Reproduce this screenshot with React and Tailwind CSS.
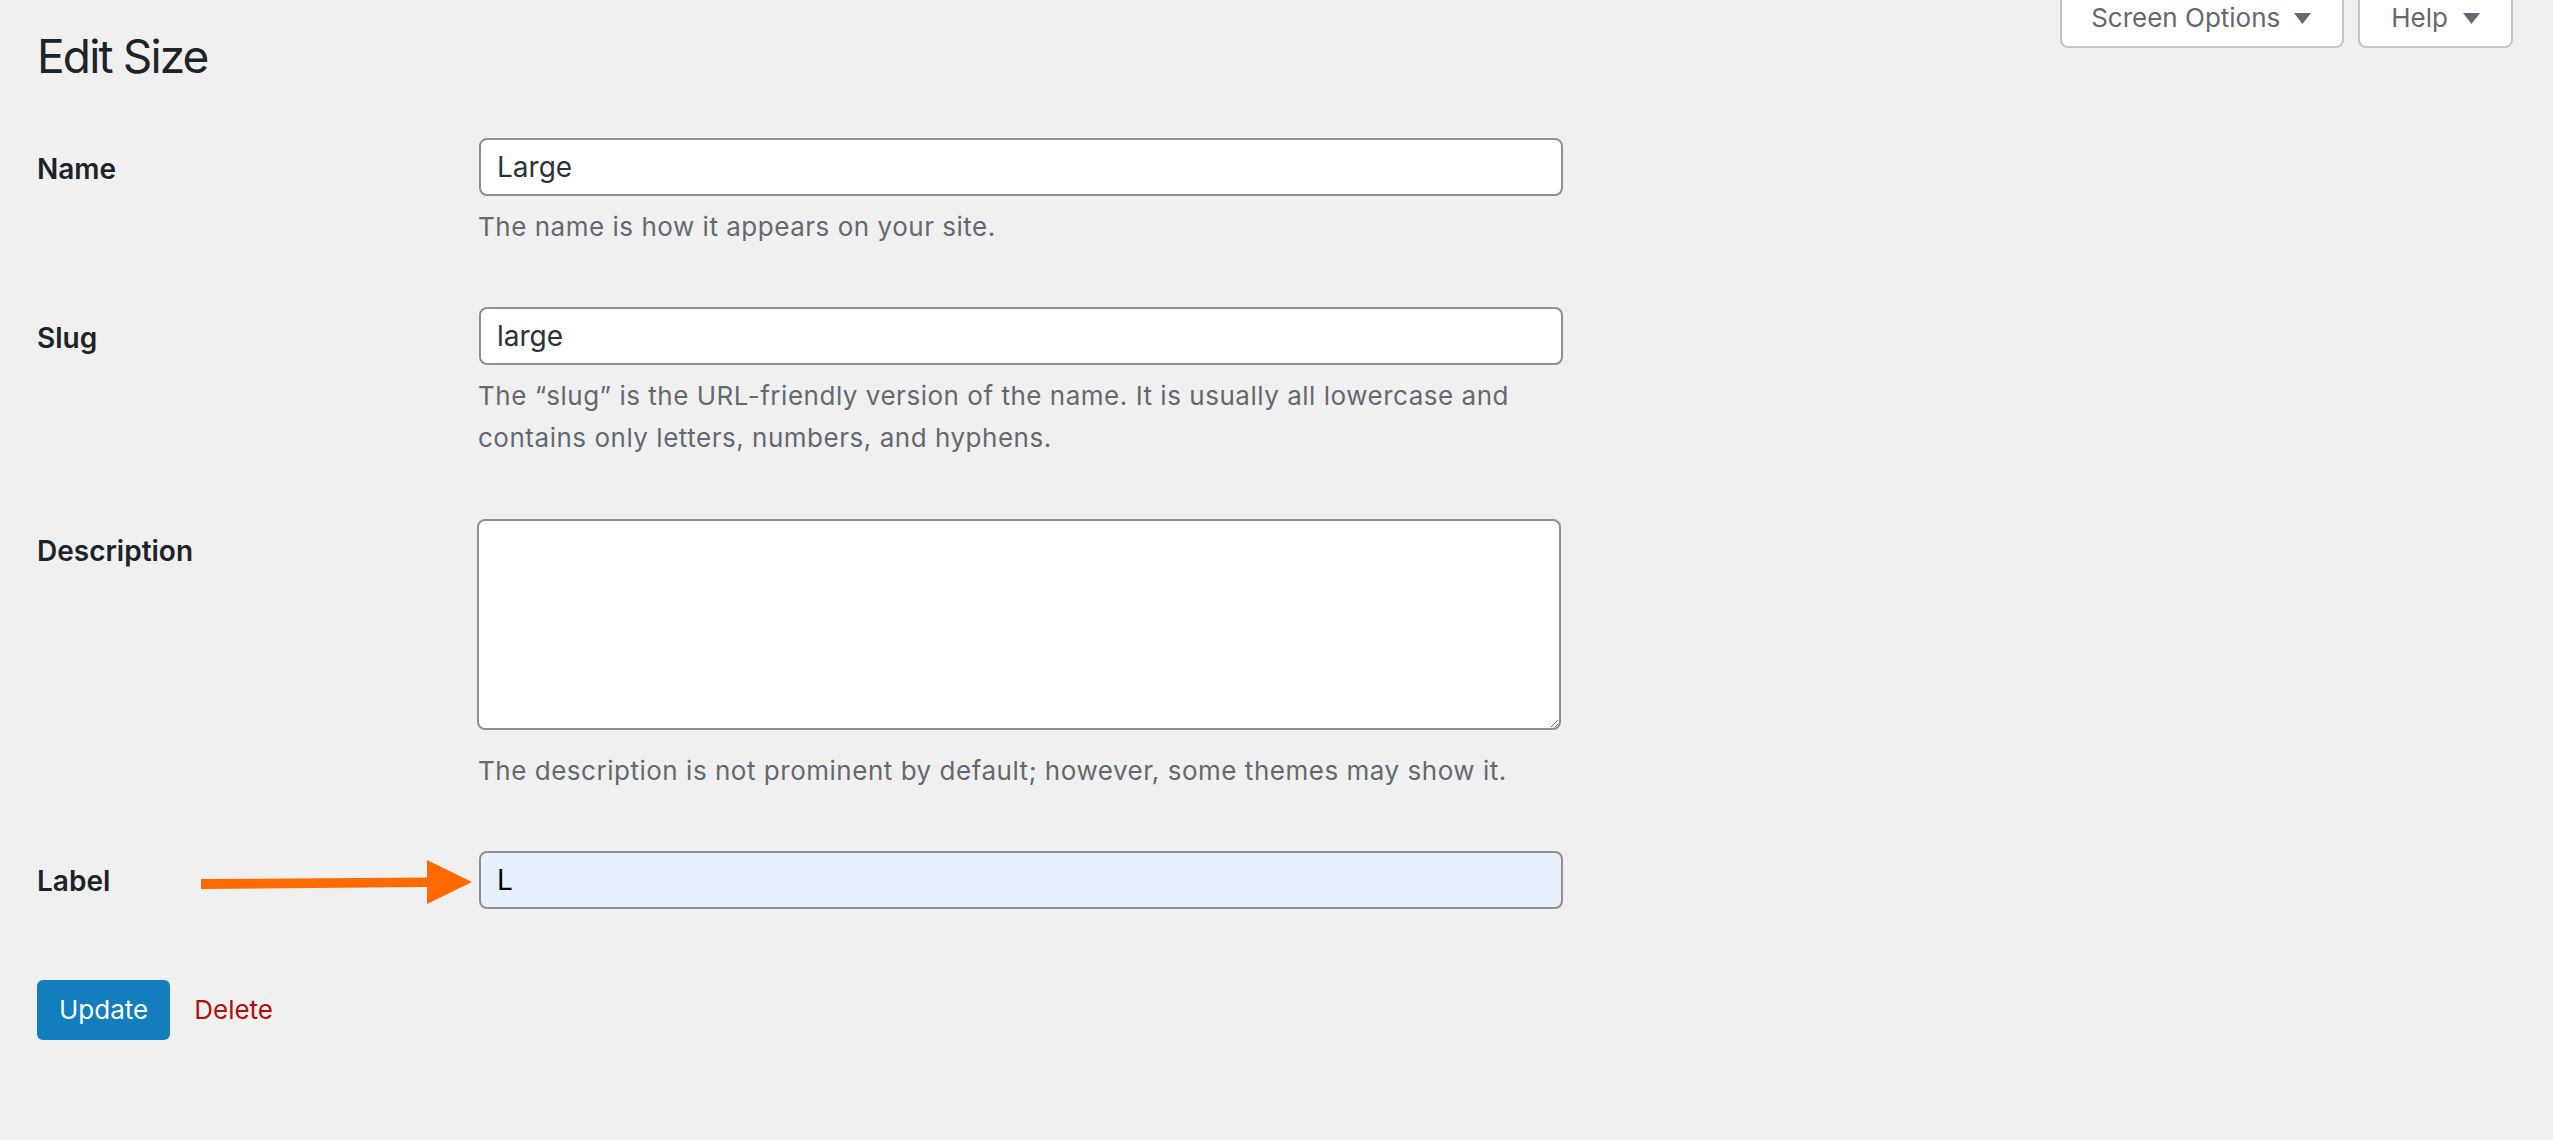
import React from "react";

function Caret() {
  return (
    <svg width="17" height="11" viewBox="0 0 17 11" className="block">
      <polygon points="0,0 17,0 8.5,11" fill="#646970" />
    </svg>
  );
}

function Row({ label, labelPt, children, className = "" }) {
  return (
    <div className={"grid grid-cols-[442px_1084px] " + className}>
      <div
        className={
          "text-[28px] leading-[36px] font-semibold text-[#1d2327] " + labelPt
        }
      >
        {label}
      </div>
      <div>{children}</div>
    </div>
  );
}

const inputCls =
  "block w-full h-[58px] border-2 border-[#8c8f94] rounded-[8px] px-[16px] text-[28px] outline-none font-['Inter']";

const descCls =
  "-ml-px text-[26px] leading-[42px] tracking-[0.02em] text-[#646970]";

export default function App() {
  return (
    <div className="relative min-h-screen bg-[#f0f0f1] font-['Inter',sans-serif]">
      <div className="flex justify-between items-start pl-[37px] pr-[40px]">
        <h1 className="mt-[26px] text-[46px] leading-[60px] font-normal tracking-[-0.04em] text-[#1d2327]">
          Edit Size
        </h1>
        <div className="flex gap-[14px]">
          <button className="flex items-center gap-[14px] h-[48px] pb-[10px] pl-[29px] pr-[31px] bg-white border-2 border-t-0 border-[#c3c4c7] rounded-b-[8px] text-[26px] leading-[36px] text-[#646970]">
            <span>Screen Options</span>
            <Caret />
          </button>
          <button className="flex items-center gap-[15px] h-[48px] pb-[10px] pl-[31px] pr-[31px] bg-white border-2 border-t-0 border-[#c3c4c7] rounded-b-[8px] text-[26px] leading-[36px] text-[#646970]">
            <span>Help</span>
            <Caret />
          </button>
        </div>
      </div>

      <div className="pl-[37px] mt-[52px]">
        <Row label="Name" labelPt="pt-[13px]">
          <input className={inputCls + " bg-white text-[#2c3338]"} defaultValue="Large" />
          <p className={"mt-[10px] " + descCls}>
            The name is how it appears on your site.
          </p>
        </Row>

        <Row label="Slug" labelPt="pt-[13px]" className="mt-[59px]">
          <input className={inputCls + " bg-white text-[#2c3338]"} defaultValue="large" />
          <p className={"mt-[10px] " + descCls}>
            The “slug” is the URL-friendly version of the name. It is usually all lowercase and
            <br />
            contains only letters, numbers, and hyphens.
          </p>
        </Row>

        <Row label="Description" labelPt="pt-[14px]" className="mt-[60px]">
          <textarea className="block -ml-[2px] w-[1084px] h-[211px] bg-white border-2 border-[#8c8f94] rounded-[8px] outline-none" />
          <p className={"mt-[20px] " + descCls}>
            The description is not prominent by default; however, some themes may show it.
          </p>
        </Row>

        <Row label="Label" labelPt="pt-[12px]" className="mt-[59px]">
          <input className={inputCls + " bg-[#e8f0fe] text-black"} defaultValue="L" />
        </Row>

        <div className="mt-[71px] flex items-center gap-[24px]">
          <button className="h-[60px] px-[22px] rounded-[6px] bg-[#137ebd] text-white text-[26px] leading-[36px]">
            Update
          </button>
          <a className="text-[26px] leading-[36px] text-[#b00e0e] cursor-pointer">Delete</a>
        </div>
      </div>

      <svg
        className="absolute left-[195px] top-[856px]"
        width="285"
        height="52"
        viewBox="0 0 285 52"
      >
        <polygon points="6,23 232,21.5 232,31 6,33" fill="#ff6a00" />
        <polygon points="232,4 277,26 232,48" fill="#ff6a00" />
      </svg>
    </div>
  );
}
